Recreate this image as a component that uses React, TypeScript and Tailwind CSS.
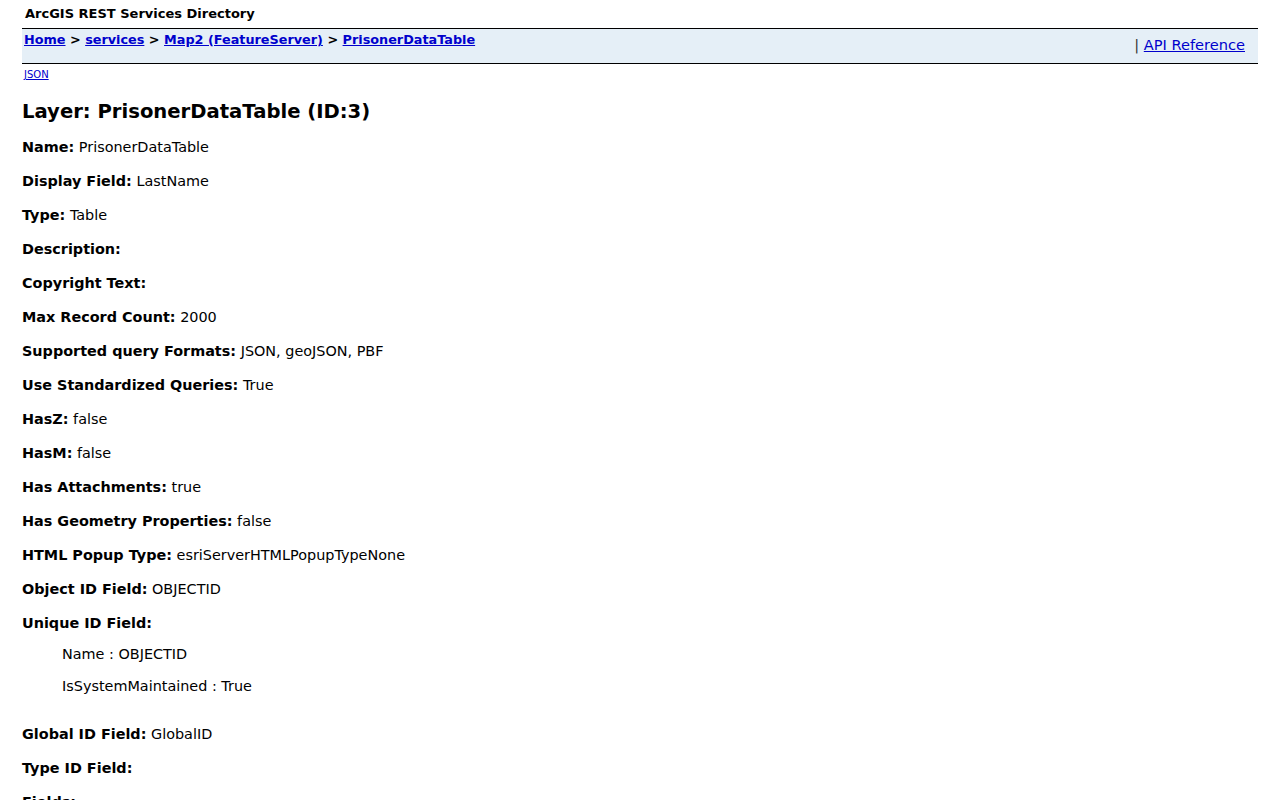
import React from "react";

type Prop = { label: string; value?: string };

const propsTop: Prop[] = [
  { label: "Name:", value: "PrisonerDataTable" },
  { label: "Display Field:", value: "LastName" },
  { label: "Type:", value: "Table" },
  { label: "Description:" },
  { label: "Copyright Text:" },
  { label: "Max Record Count:", value: "2000" },
  { label: "Supported query Formats:", value: "JSON, geoJSON, PBF" },
  { label: "Use Standardized Queries:", value: "True" },
  { label: "HasZ:", value: "false" },
  { label: "HasM:", value: "false" },
  { label: "Has Attachments:", value: "true" },
  { label: "Has Geometry Properties:", value: "false" },
  { label: "HTML Popup Type:", value: "esriServerHTMLPopupTypeNone" },
  { label: "Object ID Field:", value: "OBJECTID" },
];

const propsBottom: Prop[] = [
  { label: "Global ID Field:", value: "GlobalID" },
  { label: "Type ID Field:" },
  { label: "Fields:" },
];

const link = "text-[#0000cc] underline";

function Row({ label, value }: Prop) {
  return (
    <div className="py-[8px] leading-[18px]">
      <b>{label}</b>
      {value ? ` ${value}` : null}
    </div>
  );
}

export default function App() {
  return (
    <div className="min-h-screen bg-white text-[14.4px] text-black font-['Verdana','DejaVu_Sans',sans-serif] px-[22px]">
      <div className="pl-[3px] pt-[6px] pb-[7px] text-[13px] font-bold leading-[15px]">
        ArcGIS REST Services Directory
      </div>
      <div className="flex h-[36px] justify-between border-y border-black bg-[#e5eff7] text-[12.8px]">
        <div className="pl-[2px] pt-[3px] font-bold leading-[16px]">
          <a className={link}>Home</a> &gt; <a className={link}>services</a> &gt;{" "}
          <a className={link}>Map2 (FeatureServer)</a> &gt;{" "}
          <a className={link}>PrisonerDataTable</a>
        </div>
        <div className="pr-[13px] pt-[8px] text-[14.6px] leading-[16px]">
          <span className="text-[#333]">|</span> <a className={link}>API Reference</a>
        </div>
      </div>
      <div className="pl-[2px] pt-[5px] text-[10px] leading-[12px]">
        <a className={link}>JSON</a>
      </div>
      <h2 className="pt-[19px] pb-[6px] text-[19.6px] font-bold leading-[24px]">
        Layer: PrisonerDataTable (ID:3)
      </h2>
      {propsTop.map((p) => (
        <Row key={p.label} {...p} />
      ))}
      <div className="pt-[8px] leading-[18px]">
        <b>Unique ID Field:</b>
      </div>
      <div className="pl-[40px] pt-[13px] pb-[22px] leading-[18px]">
        <div>Name : OBJECTID</div>
        <div className="pt-[14px]">IsSystemMaintained : True</div>
      </div>
      {propsBottom.map((p) => (
        <Row key={p.label} {...p} />
      ))}
    </div>
  );
}
